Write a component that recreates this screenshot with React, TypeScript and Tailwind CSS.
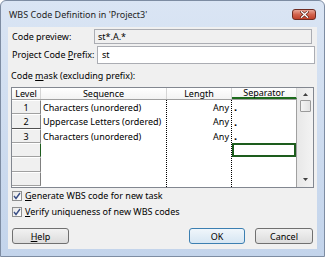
import React from "react";

const rows = [
  { lvl: "1", seq: "Characters (unordered)", len: "Any", sep: "." },
  { lvl: "2", seq: "Uppercase Letters (ordered)", len: "Any", sep: "." },
  { lvl: "3", seq: "Characters (unordered)", len: "Any", sep: "." },
  { lvl: "", seq: "", len: "", sep: "" },
  { lvl: "", seq: "", len: "", sep: "" },
  { lvl: "", seq: "", len: "", sep: "" },
];
const heights = ["h-[14px]", "h-[15px]", "h-[14px]", "h-[14px]", "h-[15px]", "h-[14px]"];

function Check() {
  return (
    <div className="w-[10px] h-[10px] border border-[#8e8f8f] bg-gradient-to-br from-[#e6e6e6] to-[#ffffff] flex items-center justify-center">
      <svg width="8" height="8" viewBox="0 0 8 8">
        <path d="M1 4 L3 6.5 L7 1" fill="none" stroke="#3a4f86" strokeWidth="1.4" />
      </svg>
    </div>
  );
}

export default function App() {
  return (
    <div className="w-[325px] h-[257px] font-['Noto_Sans',sans-serif] text-[9px] text-[#000] border border-[#7d8ca2] rounded-t-[6px] bg-gradient-to-b from-[#dae5f4] to-[#c3d4eb] overflow-hidden">
      <div className="h-[26px] flex items-center justify-between pl-[8px] pr-[8px]">
        <span className="text-[9px] text-[#1e1e1e] leading-none">WBS Code Definition in 'Project3'</span>
        <div className="w-[24px] h-[11px] rounded-[3px] border border-[#6e2c22] bg-gradient-to-b from-[#e9a596] via-[#d2634d] to-[#c0402a] flex items-center justify-center">
          <svg width="9" height="7" viewBox="0 0 9 7">
            <path d="M1.5 0.8 L7.5 6.2 M7.5 0.8 L1.5 6.2" stroke="#5a2018" strokeWidth="2.6" strokeLinecap="square" />
            <path d="M1.5 0.8 L7.5 6.2 M7.5 0.8 L1.5 6.2" stroke="#ffffff" strokeWidth="1.4" strokeLinecap="square" />
          </svg>
        </div>
      </div>
      <div className="ml-[7px] w-[309px] h-[222px] bg-[#f0f0f0] flex flex-col">
        <div className="mt-[2px] h-[15px] flex items-center">
          <div className="w-[86px] pl-[4px]">Code preview:</div>
          <div className="w-[218px] h-[15px] border border-[#abadb3] bg-[#f0f0f0] flex items-center pl-[3px]">st*.A.*</div>
        </div>
        <div className="mt-[2px] h-[18px] flex items-center">
          <div className="w-[89px] pl-[4px]">
            Project Code <span className="underline">P</span>refix:
          </div>
          <div className="w-[218px] h-[18px] border border-[#abadb3] bg-white flex items-center pl-[4px]">st</div>
        </div>
        <div className="mt-[6px] h-[12px] leading-[12px] pl-[3px]">
          Code <span className="underline">m</span>ask (excluding prefix):
        </div>
        <div className="mt-[5px] ml-[3px] w-[303px] h-[101px] border border-[#828790] bg-white flex">
          <div className="w-[285px] flex flex-col">
            <div className="h-[12px] flex border-b border-[#a0a0a0] bg-gradient-to-b from-[#ffffff] to-[#f3f3f3]">
              <div className="w-[29px] border-r border-[#d5d5d5] flex items-center justify-center leading-none">Level</div>
              <div className="w-[126px] border-r border-[#d5d5d5] flex items-center justify-center leading-none">Sequence</div>
              <div className="w-[65px] border-r border-[#d5d5d5] flex items-center justify-center leading-none">Length</div>
              <div className="w-[65px] border-r border-[#d5d5d5] border-b-2 border-b-[#1d6b1d] flex items-center justify-center leading-none">Separator</div>
            </div>
            <div className="flex flex-1">
              <div className="w-[29px] flex flex-col">
                {rows.map((r, i) => (
                  <div
                    key={i}
                    className={`${heights[i]} bg-[#f0f0f0] border-t border-t-white border-b ${i === 1 ? "border-b-[#505050]" : "border-b-[#a0a0a0]"} border-r ${i === 3 ? "border-r-[#1d5c1d]" : "border-r-[#808080]"} flex items-center justify-center leading-none`}
                  >
                    {r.lvl}
                  </div>
                ))}
              </div>
              <div className="w-[126px] border-r border-dotted border-r-[#000] flex flex-col">
                {rows.map((r, i) => (
                  <div key={i} className={`${heights[i]} flex items-center pl-[2px] leading-none whitespace-nowrap`}>
                    {r.seq}
                  </div>
                ))}
              </div>
              <div className="w-[65px] border-r border-dotted border-r-[#000] flex flex-col">
                {rows.map((r, i) => (
                  <div key={i} className={`${heights[i]} flex items-center justify-end pr-[2px] leading-none`}>
                    {r.len}
                  </div>
                ))}
              </div>
              <div className="w-[65px] border-r border-[#a0a0a0] flex flex-col">
                {rows.map((r, i) => (
                  <div
                    key={i}
                    className={`${heights[i]} flex items-end pb-[3px] pl-[2px] leading-[8px] text-[11px] font-bold text-black ${i === 3 ? "border-2 border-[#1d5c1d]" : ""}`}
                  >
                    {r.sep}
                  </div>
                ))}
              </div>
            </div>
          </div>
          <div className="w-[16px] bg-gradient-to-r from-[#e8e8e8] to-[#f3f3f3] flex flex-col items-center">
            <div className="h-[11px] flex items-center justify-center mt-[1px]">
              <svg width="5" height="3" viewBox="0 0 5 3"><path d="M0 3 L2.5 0 L5 3 Z" fill="#404040" /></svg>
            </div>
            <div className="w-[11px] h-[12px] border border-[#9a9a9a] rounded-[1px] bg-gradient-to-r from-[#f4f4f4] to-[#e2e2e2]" />
            <div className="flex-1" />
            <div className="h-[11px] flex items-center justify-center mb-[2px]">
              <svg width="5" height="3" viewBox="0 0 5 3"><path d="M0 0 L2.5 3 L5 0 Z" fill="#404040" /></svg>
            </div>
          </div>
        </div>
        <div className="mt-[1px] h-[14px] flex items-center pl-[4px] gap-[3px]">
          <Check />
          <span>
            <span className="underline">G</span>enerate WBS code for new task
          </span>
        </div>
        <div className="mt-[2px] h-[14px] flex items-center pl-[4px] gap-[3px]">
          <Check />
          <span>
            <span className="underline">V</span>erify uniqueness of new WBS codes
          </span>
        </div>
        <div className="mt-[9px] h-[16px] flex pl-[4px]">
          <button className="w-[57px] h-[16px] border border-[#707070] rounded-[3px] bg-gradient-to-b from-[#f2f2f2] to-[#dcdcdc] flex items-center justify-center leading-none">
            <span><span className="underline">H</span>elp</span>
          </button>
          <div className="flex-1" />
          <button className="w-[56px] h-[16px] border border-[#3c7fb1] rounded-[3px] bg-gradient-to-b from-[#f0f6fb] to-[#d6e6f3] flex items-center justify-center leading-none">
            OK
          </button>
          <button className="ml-[10px] mr-[4px] w-[58px] h-[16px] border border-[#707070] rounded-[3px] bg-gradient-to-b from-[#f2f2f2] to-[#dcdcdc] flex items-center justify-center leading-none">
            Cancel
          </button>
        </div>
      </div>
    </div>
  );
}
